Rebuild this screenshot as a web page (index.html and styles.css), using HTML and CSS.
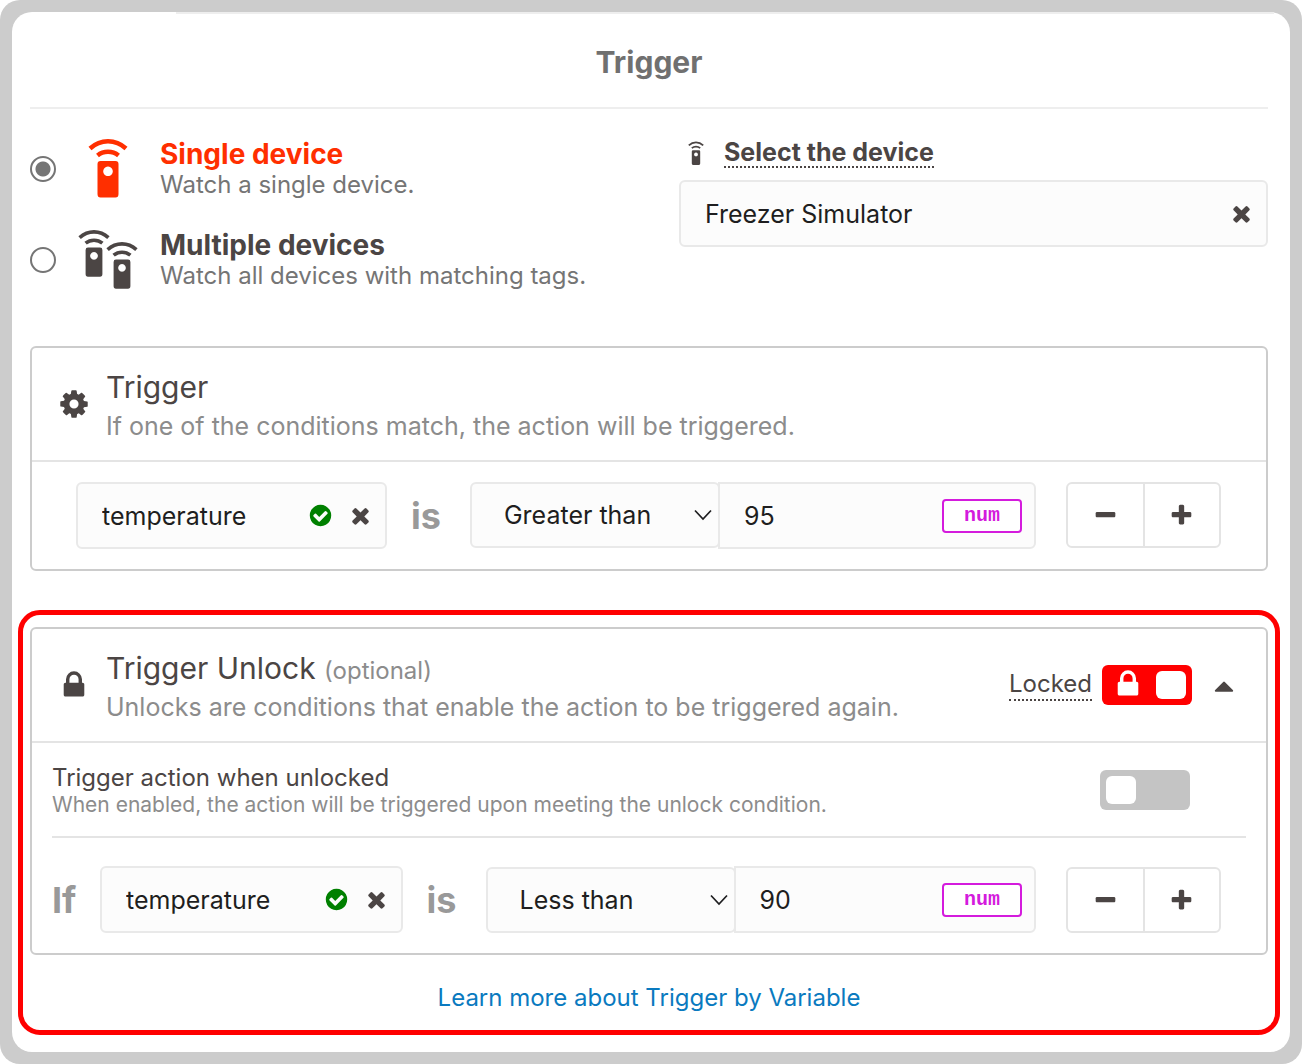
FILE: index.html
```html
<!DOCTYPE html>
<html lang="en">
<head>
    <meta charset="UTF-8">
    <meta name="viewport" content="width=device-width, initial-scale=1.0">
    <title>Trigger</title>
    <link rel="stylesheet" href="styles.css">
</head>
<body>
    <!-- Shared icons -->
    <svg class="sprite" aria-hidden="true">
        <symbol id="remote" viewBox="0 0 40 60">
            <path d="M12.500 22h15q3 0 3 3v30q0 3.500-3 3.500h-15q-3 0-3-3.500v-30q0-3 3-3zM20 27.500a4.800 4.800 0 1 0 0.010 0z" fill-rule="evenodd"/>
            <path d="M2 9.500Q10 2.300 20 2.300T38 9.500M9.500 16.500Q14 12.800 20 12.800T30.500 16.500" fill="none" stroke="currentColor" stroke-width="4.500"/>
        </symbol>
        <symbol id="gear" viewBox="0 0 1792 1792">
            <path d="M1152 896q0-106-75-181t-181-75-181 75-75 181 75 181 181 75 181-75 75-181zm512-109v222q0 12-8 23t-20 13l-185 28q-19 54-39 91 35 50 107 138 10 12 10 25t-9 23q-27 37-99 108t-94 71q-12 0-26-9l-138-108q-44 23-91 38-16 136-29 186-7 28-36 28h-222q-14 0-24.500-8.500t-11.500-21.500l-28-184q-49-16-90-37l-141 107q-10 9-25 9-14 0-25-11-126-114-165-168-7-10-7-23 0-12 8-23 15-21 51-66.500t54-70.500q-27-50-41-99l-183-27q-13-2-21-12.500t-8-23.500v-222q0-12 8-23t19-13l186-28q14-46 39-92-40-57-107-138-10-12-10-24 0-10 9-23 26-36 98.500-107.500t94.500-71.500q13 0 26 10l138 107q44-23 91-38 16-136 29-186 7-28 36-28h222q14 0 24.500 8.500t11.500 21.500l28 184q49 16 90 37l142-107q9-9 24-9 13 0 25 10 129 119 165 170 7 8 7 22 0 12-8 23-15 21-51 66.500t-54 70.500q26 50 41 98l183 28q13 2 21 12.500t8 23.500z"/>
        </symbol>
        <symbol id="lock" viewBox="0 0 1792 1792">
            <path d="M640 768h512v-192q0-106-75-181t-181-75-181 75-75 181v192zm832 96v576q0 40-28 68t-68 28h-960q-40 0-68-28t-28-68v-576q0-40 28-68t68-28h32v-192q0-184 132-316t316-132 316 132 132 316v192h32q40 0 68 28t28 68z"/>
        </symbol>
        <symbol id="times" viewBox="0 0 1792 1792">
            <path d="M1490 1322q0 40-28 68l-136 136q-28 28-68 28t-68-28l-294-294-294 294q-28 28-68 28t-68-28l-136-136q-28-28-28-68t28-68l294-294-294-294q-28-28-28-68t28-68l136-136q28-28 68-28t68 28l294 294 294-294q28-28 68-28t68 28l136 136q28 28 28 68t-28 68l-294 294 294 294q28 28 28 68z"/>
        </symbol>
        <symbol id="check" viewBox="0 0 1792 1792">
            <path d="M1412 734q0-28-18-46l-91-90q-19-19-45-19t-45 19l-408 407-226-226q-19-19-45-19t-45 19l-91 90q-18 18-18 46 0 27 18 45l362 362q19 19 45 19 27 0 46-19l543-543q18-18 18-45zm252 162q0 209-103 385.500t-279.500 279.500-385.500 103-385.500-103-279.500-279.500-103-385.500 103-385.500 279.500-279.500 385.500-103 385.500 103 279.500 279.500 103 385.500z"/>
        </symbol>
        <symbol id="plus" viewBox="0 0 1792 1792">
            <path d="M1600 736v192q0 40-28 68t-68 28h-416v416q0 40-28 68t-68 28h-192q-40 0-68-28t-28-68v-416h-416q-40 0-68-28t-28-68v-192q0-40 28-68t68-28h416v-416q0-40 28-68t68-28h192q40 0 68 28t28 68v416h416q40 0 68 28t28 68z"/>
        </symbol>
        <symbol id="minus" viewBox="0 0 1792 1792">
            <path d="M1600 736v192q0 40-28 68t-68 28h-1216q-40 0-68-28t-28-68v-192q0-40 28-68t68-28h1216q40 0 68 28t28 68z"/>
        </symbol>
        <symbol id="caret-up" viewBox="0 0 1792 1792">
            <path d="M1408 1216q0 26-19 45t-45 19h-896q-26 0-45-19t-19-45 19-45l448-448q19-19 45-19t45 19l448 448q19 19 19 45z"/>
        </symbol>
        <symbol id="chevron" viewBox="0 0 18 12">
            <path d="M1 1.500l8 8.500 8-8.500" fill="none" stroke="currentColor" stroke-width="1.700"/>
        </symbol>
    </svg>

    <div class="frame">
    <main class="modal">
        <h1 class="modal-title">Trigger</h1>

        <!-- Device selection -->
        <div class="source">
            <div class="options">
                <label class="option active">
                    <input type="radio" name="source" checked>
                    <svg class="option-icon" viewBox="0 0 60 60"><use href="#remote" x="10" y="0" width="40" height="60"/></svg>
                    <span>
                        <strong>Single device</strong>
                        <small>Watch a single device.</small>
                    </span>
                </label>
                <label class="option">
                    <input type="radio" name="source">
                    <svg class="option-icon" viewBox="0 0 60 60"><use href="#remote" x="0" y="0" width="32" height="48"/><use href="#remote" x="28" y="12" width="32" height="48"/></svg>
                    <span>
                        <strong>Multiple devices</strong>
                        <small>Watch all devices with matching tags.</small>
                    </span>
                </label>
            </div>
            <div class="device">
                <div class="device-label">
                    <svg class="device-icon"><use href="#remote"/></svg>
                    <label for="device">Select the device</label>
                </div>
                <div class="field">
                    <input type="text" id="device" value="Freezer Simulator">
                    <button type="button" class="clear" aria-label="Clear device"><svg class="icon"><use href="#times"/></svg></button>
                </div>
            </div>
        </div>

        <!-- Trigger conditions -->
        <section class="panel">
            <header class="panel-header">
                <svg class="icon-lg"><use href="#gear"/></svg>
                <div class="panel-text">
                    <h2>Trigger</h2>
                    <p>If one of the conditions match, the action will be triggered.</p>
                </div>
            </header>
            <div class="condition">
                <div class="field variable">
                    <input type="text" value="temperature" aria-label="Variable">
                    <svg class="icon valid"><use href="#check"/></svg>
                    <button type="button" class="clear" aria-label="Clear variable"><svg class="icon"><use href="#times"/></svg></button>
                </div>
                <span class="word is">is</span>
                <div class="select">
                    <select aria-label="Comparison">
                        <option>Greater than</option>
                        <option>Less than</option>
                    </select>
                    <svg class="chevron"><use href="#chevron"/></svg>
                </div>
                <div class="field value">
                    <input type="text" value="95" aria-label="Value">
                    <button type="button" class="type">num</button>
                </div>
                <div class="stepper">
                    <button type="button" aria-label="Remove condition"><svg class="icon"><use href="#minus"/></svg></button>
                    <button type="button" aria-label="Add condition"><svg class="icon"><use href="#plus"/></svg></button>
                </div>
            </div>
        </section>

        <!-- Trigger unlock -->
        <div class="highlight">
            <section class="panel">
                <header class="panel-header">
                    <svg class="icon-lg"><use href="#lock"/></svg>
                    <div class="panel-text">
                        <h2>Trigger Unlock <span>(optional)</span></h2>
                        <p>Unlocks are conditions that enable the action to be triggered again.</p>
                    </div>
                    <label class="locked" for="locked">Locked</label>
                    <div class="switch">
                        <input type="checkbox" id="locked" checked>
                        <svg class="icon-lg switch-icon"><use href="#lock"/></svg>
                    </div>
                    <button type="button" class="collapse" aria-label="Collapse"><svg class="icon-lg"><use href="#caret-up"/></svg></button>
                </header>
                <div class="setting">
                    <label for="when-unlocked">
                        <strong>Trigger action when unlocked</strong>
                        <small>When enabled, the action will be triggered upon meeting the unlock condition.</small>
                    </label>
                    <div class="switch">
                        <input type="checkbox" id="when-unlocked">
                    </div>
                </div>
                <div class="condition unlock">
                    <span class="word">If</span>
                    <div class="field variable">
                        <input type="text" value="temperature" aria-label="Variable">
                        <svg class="icon valid"><use href="#check"/></svg>
                        <button type="button" class="clear" aria-label="Clear variable"><svg class="icon"><use href="#times"/></svg></button>
                    </div>
                    <span class="word is">is</span>
                    <div class="select">
                        <select aria-label="Comparison">
                            <option>Less than</option>
                            <option>Greater than</option>
                        </select>
                        <svg class="chevron"><use href="#chevron"/></svg>
                    </div>
                    <div class="field value">
                        <input type="text" value="90" aria-label="Value">
                        <button type="button" class="type">num</button>
                    </div>
                    <div class="stepper">
                        <button type="button" aria-label="Remove condition"><svg class="icon"><use href="#minus"/></svg></button>
                        <button type="button" aria-label="Add condition"><svg class="icon"><use href="#plus"/></svg></button>
                    </div>
                </div>
            </section>
            <a class="learn" href="#">Learn more about Trigger by Variable</a>
        </div>
    </main>
    </div>
</body>
</html>
```
FILE: styles.css
```css
* {
    box-sizing: border-box;
}

body {
    margin: 0;
    background: #fff;
    color: #4b4544;
    font-family: Inter, "Liberation Sans", sans-serif;
    font-size: 24px;
}

input, select, button {
    font: inherit;
    color: inherit;
}

button {
    padding: 0;
    border: none;
    background: none;
    cursor: pointer;
}

svg {
    display: block;
    flex: none;
    fill: currentColor;
}

.sprite {
    position: absolute;
    width: 0;
    height: 0;
}

.sprite symbol {
    overflow: visible;
}

.icon {
    width: 25px;
    height: 25px;
}

.icon-lg {
    width: 32px;
    height: 32px;
}

.frame {
    min-height: 100vh;
    padding: 12px;
    border-radius: 20px;
    background: #ccc;
}

.modal {
    position: relative;
    padding: 0 22px 17px 18px;
    border-radius: 20px;
    background: #fff;
}

/* Hairline left along the top edge */
.modal::before {
    content: "";
    position: absolute;
    top: 0;
    left: 164px;
    right: 16px;
    height: 2px;
    background: #eee;
}

.modal-title {
    margin: 0;
    padding: 30px 0 25px;
    border-bottom: 2px solid #eee;
    color: #707070;
    font-size: 30px;
    font-weight: 700;
    line-height: 40px;
    text-align: center;
}

/* Device selection */
.source {
    display: grid;
    grid-template-columns: 1fr 1fr;
    column-gap: 60px;
    padding: 29px 0 55px;
}

.options {
    display: grid;
    row-gap: 29px;
    align-content: start;
}

.option {
    display: flex;
    align-items: center;
    gap: 22px;
}

.option strong,
.option small {
    display: block;
    white-space: nowrap;
}

.option strong {
    font-size: 28px;
    line-height: 32px;
}

.option small {
    color: #757575;
    font-size: 24px;
    line-height: 30px;
}

.option input {
    appearance: none;
    flex: none;
    width: 26px;
    height: 26px;
    margin: 0;
    border: 2px solid #757575;
    border-radius: 50%;
}

.option input:checked {
    background: radial-gradient(circle, #757575 7px, #fff 8px);
}

.option-icon {
    width: 60px;
    height: 60px;
}

.option.active strong,
.option.active .option-icon {
    color: #ff2f00;
}

.device-label {
    display: flex;
    align-items: center;
    gap: 20px;
    margin-bottom: 12px;
    padding-left: 9px;
    font-size: 25px;
    font-weight: 700;
    line-height: 28px;
}

.device-icon {
    width: 16px;
    height: 25px;
}

.device-label label,
.locked {
    border-bottom: 2px dotted #4b4544;
}

/* Fields */
.field {
    display: flex;
    align-items: center;
    min-width: 0;
    height: 67px;
    padding: 0 12px 0 24px;
    border: 2px solid #e9e9e9;
    border-radius: 6px;
    background: #fcfcfc;
    font-size: 25px;
}

.field input {
    flex: 1;
    min-width: 0;
    padding: 0;
    border: none;
    outline: none;
    background: none;
    color: #1e1e20;
}

.valid {
    margin-right: 15px;
    color: #008000;
}

.select {
    position: relative;
    width: 250px;
    height: 66px;
    font-size: 25px;
}

.select select {
    appearance: none;
    width: 100%;
    height: 100%;
    padding: 0 40px 0 32px;
    border: 2px solid #e9e9e9;
    border-radius: 6px;
    background: #fcfcfc;
    color: #1e1e20;
}

.chevron {
    position: absolute;
    top: 27px;
    right: 8px;
    width: 18px;
    height: 12px;
    color: #1e1e20;
    pointer-events: none;
}

.value {
    position: relative;
    border-radius: 0 6px 6px 0;
}

.type {
    width: 80px;
    height: 34px;
    border: 2px solid #d41bdd;
    border-radius: 4px;
    background: #fff;
    color: #d41bdd;
    font-family: "Liberation Mono", monospace;
    font-size: 20px;
    font-weight: 700;
}

.stepper {
    display: flex;
    height: 66px;
    margin-left: 30px;
    border: 2px solid #e4e4e4;
    border-radius: 6px;
}

.stepper button {
    display: flex;
    flex: 1;
    align-items: center;
    justify-content: center;
}

.stepper button + button {
    border-left: 2px solid #e4e4e4;
}

/* Panels */
.panel {
    border: 2px solid #ccc;
    border-radius: 6px;
}

.panel-header {
    display: flex;
    align-items: center;
    padding: 17px 26px;
    border-bottom: 2px solid #e4e4e4;
}

.panel-text {
    flex: 1;
    margin-left: 16px;
}

.panel-text h2 {
    margin: 0;
    font-size: 30px;
    font-weight: 400;
    line-height: 44px;
}

.panel-text h2 span {
    color: #8c8c8c;
    font-size: 24px;
    line-height: 1;
}

.panel-text p {
    margin: 0;
    color: #8c8c8c;
    font-size: 25px;
    line-height: 34px;
}

.condition {
    display: grid;
    grid-template-columns: 44fr 83px 248px 45fr 185px;
    align-items: start;
    padding: 20px 45px 20px 44px;
}

.condition.unlock {
    grid-template-columns: 48px 1fr 83px 248px 1fr 185px;
    align-items: end;
    padding: 28px 45px 20px 20px;
}

.word {
    align-self: center;
    color: #999;
    font-size: 36px;
    font-weight: 700;
}

.is {
    padding-left: 24px;
}

/* Switches */
.locked {
    margin-right: 10px;
    line-height: 30px;
}

.switch {
    position: relative;
    flex: none;
    width: 90px;
    height: 40px;
}

.switch input {
    appearance: none;
    display: flex;
    width: 100%;
    height: 100%;
    margin: 0;
    padding: 6px;
    border-radius: 6px;
    background: #c4c4c4;
}

.switch input::before {
    content: "";
    width: 30px;
    border-radius: 6px;
    background: #fff;
}

.switch input:checked {
    justify-content: flex-end;
    background: #f00;
}

.switch-icon {
    position: absolute;
    top: 3px;
    left: 10px;
    color: #fff;
    pointer-events: none;
}

.collapse {
    margin-left: 16px;
}

.setting {
    display: flex;
    align-items: center;
    justify-content: space-between;
    margin: 0 20px;
    padding: 20px 56px 19px 0;
    border-bottom: 2px solid #e4e4e4;
}

.setting strong,
.setting small {
    display: block;
    font-weight: 400;
}

.setting strong {
    line-height: 30px;
}

.setting small {
    color: #8c8c8c;
    font-size: 21px;
    line-height: 24px;
}

/* Red frame round the unlock section */
.highlight {
    margin: 39px -12px 0;
    padding: 12px 7px 17px;
    border: 5px solid #f00;
    border-radius: 22px;
}

.learn {
    display: block;
    width: max-content;
    margin: 28px auto 0;
    color: #0a7abf;
    line-height: 30px;
    text-decoration: none;
}
```
